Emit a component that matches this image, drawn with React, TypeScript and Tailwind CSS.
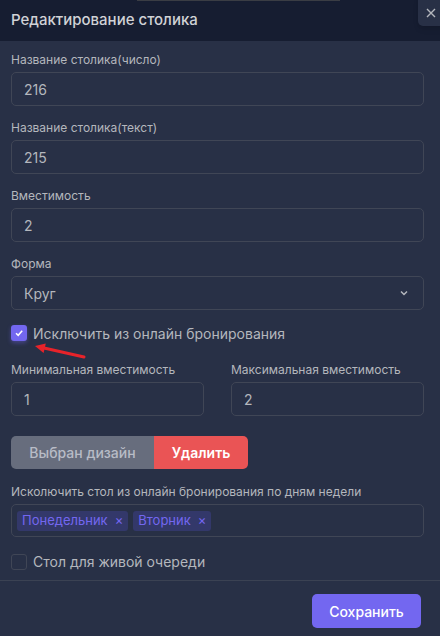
import React from "react";

const font = { fontFamily: "Inter, 'Noto Sans', sans-serif" };

function Field({ label, value }: { label: string; value: string }) {
  return (
    <div className="flex flex-col">
      <label className="text-[12px] leading-[14px] text-[#b4b7bd] mb-[5px]">{label}</label>
      <div className="h-[34px] rounded-[5px] border border-[#404656] flex items-center px-[12px] text-[14px] text-[#b4b7bd]">
        {value}
      </div>
    </div>
  );
}

function Chip({ text }: { text: string }) {
  return (
    <div className="h-[20px] rounded-[3px] bg-[#33386a] flex items-center pl-[5px] pr-[5px] gap-[7px] text-[13px] text-[#7367f0]">
      <span>{text}</span>
      <span className="text-[13px] leading-none">×</span>
    </div>
  );
}

export default function App() {
  return (
    <div className="w-[440px] h-[636px] bg-[#283046] flex flex-col overflow-hidden" style={font}>
      {/* header */}
      <div className="h-[41px] shrink-0 bg-[#161d31] flex items-center px-[11px] relative">
        <div className="absolute top-0 left-[137px] w-[203px] h-[1px] bg-[#3a3d44]" />
        <span className="text-[15px] font-medium text-[#d0d2d6]">Редактирование столика</span>
        <div className="absolute right-[-10px] top-[-6px] w-[32px] h-[32px] rounded-[5px] bg-[#283046] shadow-md flex items-center justify-start pl-[8px]">
          <svg width="10" height="10" viewBox="0 0 10 10" className="mt-[6px]">
            <path d="M1 1 L9 9 M9 1 L1 9" stroke="#b4b7bd" strokeWidth="1.4" />
          </svg>
        </div>
      </div>

      {/* body */}
      <div className="flex-1 pl-[11px] pr-[16px] pt-[12px] flex flex-col">
        <Field label="Название столика(число)" value="216" />
        <div className="h-[15px]" />
        <Field label="Название столика(текст)" value="215" />
        <div className="h-[15px]" />
        <Field label="Вместимость" value="2" />
        <div className="h-[15px]" />
        <div className="flex flex-col">
          <label className="text-[12px] leading-[14px] text-[#b4b7bd] mb-[5px]">Форма</label>
          <div className="h-[34px] rounded-[5px] border border-[#404656] flex items-center justify-between px-[12px] text-[14px] text-[#b4b7bd]">
            <span>Круг</span>
            <svg width="10" height="10" viewBox="0 0 10 10" className="mr-[2px]">
              <path d="M2 3.5 L5 6.5 L8 3.5" stroke="#b4b7bd" strokeWidth="1.5" fill="none" />
            </svg>
          </div>
        </div>

        <div className="flex items-center gap-[6px] mt-[15px] h-[16px] relative">
          <div className="w-[16px] h-[16px] rounded-[3px] bg-[#7367f0] flex items-center justify-center shadow-[0_2px_4px_rgba(115,103,240,0.4)]">
            <svg width="10" height="10" viewBox="0 0 10 10">
              <path d="M2 5.2 L4.2 7.3 L8.2 2.8" stroke="#fff" strokeWidth="1.5" fill="none" />
            </svg>
          </div>
          <span className="text-[14px] text-[#b4b7bd]">Исключить из онлайн бронирования</span>
          <svg width="60" height="24" viewBox="0 0 60 24" className="absolute left-[20px] top-[14px]">
            <path d="M13 9 L53 18" stroke="#e8232a" strokeWidth="3" strokeLinecap="round" />
            <path d="M4 7 L14.8 4.6 L12.6 14 Z" fill="#e8232a" />
          </svg>
        </div>

        <div className="grid grid-cols-2 gap-x-[27px] mt-[22px]">
          <Field label="Минимальная вместимость" value="1" />
          <Field label="Максимальная вместимость" value="2" />
        </div>

        <div className="flex mt-[20px]">
          <div className="h-[33px] w-[143px] rounded-l-[5px] bg-[#676d7d] flex items-center justify-center text-[14px] font-medium text-[#b8bcc6]">
            Выбран дизайн
          </div>
          <div className="h-[33px] w-[94px] rounded-r-[5px] bg-[#ea5455] flex items-center justify-center text-[14px] font-semibold text-white">
            Удалить
          </div>
        </div>

        <div className="flex flex-col mt-[16px]">
          <label className="text-[12px] leading-[14px] text-[#b4b7bd] mb-[5px]">
            Исколючить стол из онлайн бронирования по дням недели
          </label>
          <div className="h-[33px] rounded-[5px] border border-[#404656] flex items-center px-[5px] gap-[5px]">
            <Chip text="Понедельник" />
            <Chip text="Вторник" />
          </div>
        </div>

        <div className="flex items-center gap-[6px] mt-[14px]">
          <div className="w-[16px] h-[16px] rounded-[3px] border border-[#404656]" />
          <span className="text-[14px] text-[#b4b7bd]">Стол для живой очереди</span>
        </div>
      </div>

      {/* footer */}
      <div className="h-[56px] shrink-0 border-t border-[#3b4253] flex items-start justify-end pr-[19px] pt-[13px]">
        <div className="h-[34px] w-[109px] rounded-[5px] bg-[#7367f0] flex items-center justify-center text-[14px] font-medium text-white">
          Сохранить
        </div>
      </div>
    </div>
  );
}
